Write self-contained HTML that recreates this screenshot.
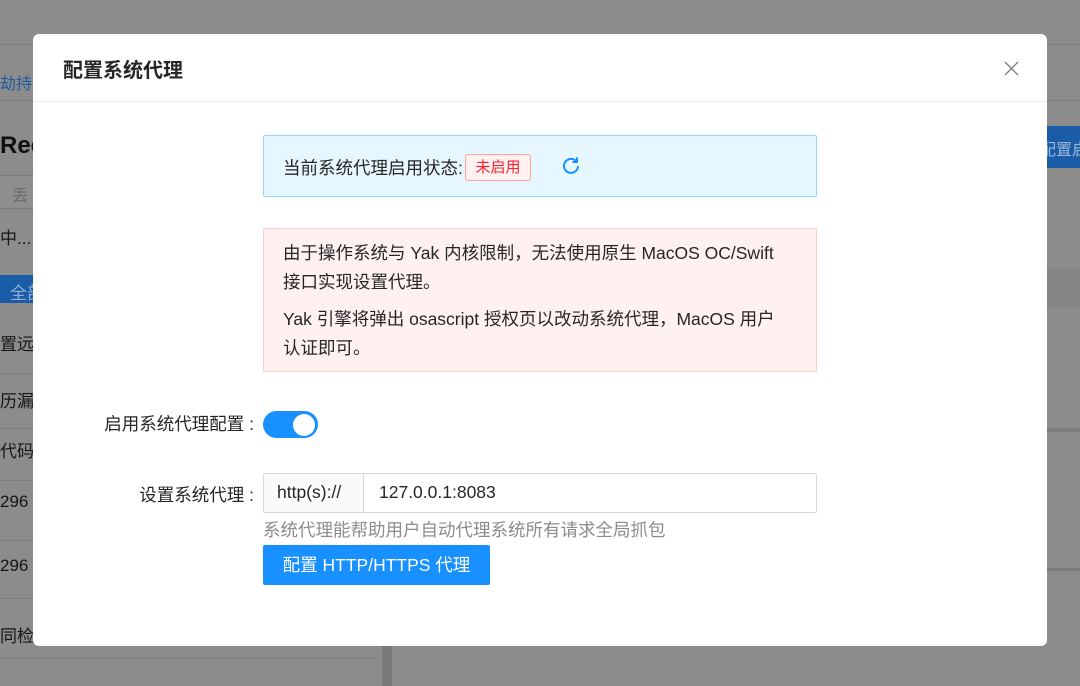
<!DOCTYPE html>
<html><head><meta charset="utf-8"><style>
*{box-sizing:border-box;margin:0;padding:0}
body{width:1080px;height:686px;overflow:hidden;background:#8c8c8c;font-family:"Liberation Sans","Noto Sans CJK SC",sans-serif;position:relative;color:#262626}
.a{position:absolute;white-space:nowrap}
.bgt{position:absolute;font-size:17px;color:#161616;white-space:nowrap}
.ln{position:absolute;height:1px;background:#808080}
.modal{position:absolute;left:33px;top:34px;width:1014px;height:612px;background:#fff;border-radius:6px;overflow:hidden}
.t16{font-size:17.5px;color:#262626}
</style></head><body>
<div class="ln" style="left:0;top:44px;width:1080px"></div>
<div class="ln" style="left:0;top:100px;width:1080px"></div>
<div class="bgt" style="left:0;top:70px;color:#1d5aa0;font-size:16px">劫持</div>
<div class="bgt" style="left:0;top:132px;font-size:24px;font-weight:bold;color:#111">Rec</div>
<div class="a" style="left:0;top:175px;width:40px;height:34px;border:1px solid #7a7a7a;border-left:none;background:#8e8e8e"></div>
<div class="bgt" style="left:12px;top:182px;color:#6a6a6a;font-size:16px">丢</div>
<div class="bgt" style="left:0;top:224px">中...</div>
<div class="a" style="left:0;top:275px;width:40px;height:28px;background:#1a5ca5"></div>
<div class="bgt" style="left:10px;top:279px;color:#8fb0d8">全部</div>
<div class="bgt" style="left:0;top:330px">置远</div>
<div class="ln" style="left:0;top:373px;width:380px"></div>
<div class="bgt" style="left:0;top:387px">历漏洞</div>
<div class="ln" style="left:0;top:428px;width:380px"></div>
<div class="bgt" style="left:0;top:437px">代码扫</div>
<div class="ln" style="left:0;top:480px;width:380px"></div>
<div class="bgt" style="left:0;top:492px">296</div>
<div class="ln" style="left:0;top:540px;width:380px"></div>
<div class="bgt" style="left:0;top:556px">296</div>
<div class="ln" style="left:0;top:598px;width:380px"></div>
<div class="bgt" style="left:0;top:622px">同检测</div>
<div class="ln" style="left:0;top:658px;width:380px"></div>
<div class="a" style="left:382px;top:560px;width:10px;height:126px;background:#7a7a7a"></div>
<div class="a" style="left:1040px;top:126px;width:40px;height:42px;background:#1a5ca5"></div>
<div class="bgt" style="left:1040px;top:136px;color:#9ab8dc;font-size:16px">配置启</div>
<div class="a" style="left:1040px;top:268px;width:40px;height:40px;background:#858585"></div>
<div class="a" style="left:1040px;top:428px;width:40px;height:4px;background:#7c7c7c"></div>
<div class="a" style="left:400px;top:568px;width:680px;height:3px;background:#7a7a7a"></div>

<div class="modal">
  <div class="a" style="left:30px;top:20px;font-size:20px;font-weight:bold;color:#262626">配置系统代理</div>
  <svg class="a" style="left:971px;top:27px" width="15" height="15" viewBox="0 0 16 16"><path d="M1 1L15 15M15 1L1 15" stroke="#777" stroke-width="1.4"/></svg>
  <div class="a" style="left:0;top:67px;width:1014px;height:1px;background:#eee"></div>

  <div class="a" style="left:230px;top:101px;width:554px;height:62px;background:#e6f7ff;border:1px solid #91d5ff;border-radius:2px"></div>
  <div class="a t16" style="left:250px;top:121px">当前系统代理启用状态:</div>
  <div class="a" style="left:432px;top:120px;width:66px;height:27px;background:#fff1f0;border:1px solid #ffa39e;border-radius:3px;color:#f5222d;font-size:15px;text-align:center;line-height:25px">未启用</div>
  <svg class="a" style="left:528px;top:122px" width="20" height="20" viewBox="0 0 20 20"><path d="M17 10A7 7 0 1 1 15 5" fill="none" stroke="#1890ff" stroke-width="2"/><path d="M16 1.5V6H11.5" fill="none" stroke="#1890ff" stroke-width="2"/></svg>

  <div class="a" style="left:230px;top:194px;width:554px;height:144px;background:#fff1f0;border:1px solid #ffccc7;border-radius:2px"></div>
  <div class="a t16" style="left:250px;top:205px;line-height:29px">由于操作系统与 Yak 内核限制，无法使用原生 MacOS OC/Swift<br>接口实现设置代理。</div>
  <div class="a t16" style="left:250px;top:271px;line-height:29px">Yak 引擎将弹出 osascript 授权页以改动系统代理，MacOS 用户<br>认证即可。</div>

  <div class="a t16" style="left:0;width:221px;text-align:right;top:377px">启用系统代理配置 :</div>
  <div class="a" style="left:230px;top:377px;width:55px;height:27px;background:#1890ff;border-radius:14px"></div>
  <div class="a" style="left:260px;top:380px;width:22px;height:22px;background:#fff;border-radius:50%"></div>

  <div class="a t16" style="left:0;width:221px;text-align:right;top:448px">设置系统代理 :</div>
  <div class="a" style="left:230px;top:439px;width:554px;height:40px;border:1px solid #d9d9d9;border-radius:2px"></div>
  <div class="a" style="left:230px;top:439px;width:101px;height:40px;background:#fafafa;border:1px solid #d9d9d9;border-radius:2px 0 0 2px"></div>
  <div class="a t16" style="left:244px;top:448px">http(s)://</div>
  <div class="a t16" style="left:346px;top:448px">127.0.0.1:8083</div>
  <div class="a" style="left:230px;top:483px;font-size:17.5px;color:#8c8c8c">系统代理能帮助用户自动代理系统所有请求全局抓包</div>
  <div class="a" style="left:230px;top:511px;width:227px;height:40px;background:#1890ff;border-radius:2px;color:#fff;font-size:17.5px;text-align:center;line-height:40px">配置 HTTP/HTTPS 代理</div>
</div>
</body></html>
